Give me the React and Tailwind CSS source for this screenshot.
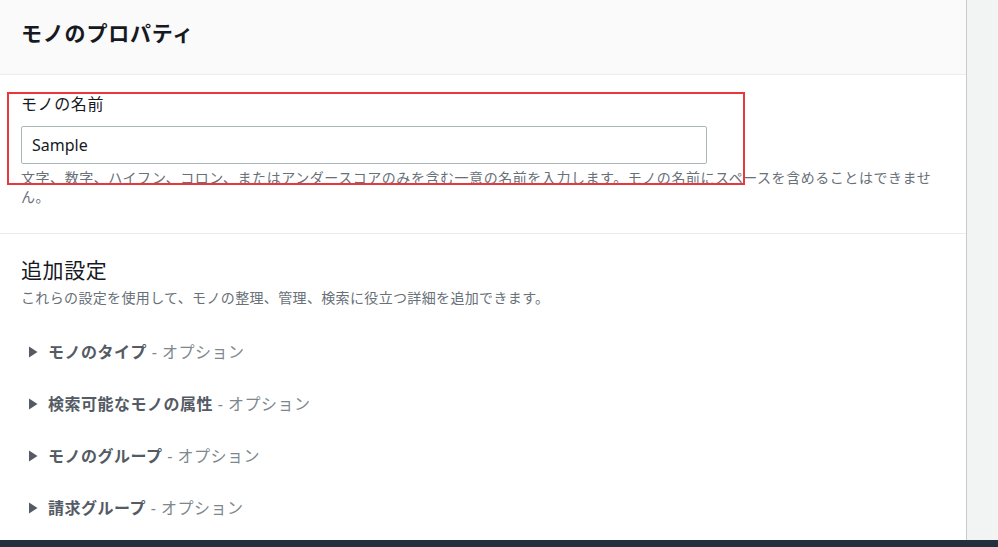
const items = [
  { name: 'モノのタイプ' },
  { name: '検索可能なモノの属性' },
  { name: 'モノのグループ' },
  { name: '請求グループ' },
]

function Caret() {
  return (
    <svg width="10" height="12" viewBox="0 0 10 12" className="shrink-0">
      <path d="M1 0.5 L9.5 6 L1 11.5 Z" fill="#545b64" />
    </svg>
  )
}

export default function App() {
  return (
    <div
      className="h-[547px] w-[998px] flex flex-col overflow-hidden bg-[#f2f3f3] text-[#16191f]"
      style={{ fontFamily: '"Noto Sans", "Noto Sans CJK JP", sans-serif' }}
    >
      <div className="flex flex-1 min-h-0">
        <div className="w-[967px] bg-white border-r border-[#c6cccc] flex flex-col">
          <div className="h-[75px] bg-[#fafafa] border-b border-[#eaeded] flex items-center pl-[21px] pb-[6px]">
            <h2 className="text-[21px] font-bold tracking-[0.8px] text-[#16191f]">モノのプロパティ</h2>
          </div>

          <div className="relative px-[21px] pt-[18px] pb-[27px] border-b border-[#eaeded]">
            <div className="text-[16px] leading-[22px] tracking-[0.6px] text-[#16191f]">モノの名前</div>
            <div className="mt-[11px] w-[686px] h-[38px] border border-[#aab7b8] rounded-[2px] flex items-center px-[10px]">
              <span className="text-[16px] text-[#16191f]">Sample</span>
            </div>
            <p className="mt-[4px] w-[925px] text-[14px] leading-[19px] tracking-[0.55px] text-[#687078]">
              文字、数字、ハイフン、コロン、またはアンダースコアのみを含む一意の名前を入力します。モノの名前にスペースを含めることはできません。
            </p>
            <div className="absolute left-[7px] top-[17px] w-[738px] h-[93px] border-2 border-[#e8383d] pointer-events-none" />
          </div>

          <div className="px-[21px] pt-[22px]">
            <h3 className="text-[21px] leading-[28px] tracking-[0.6px] text-[#16191f]">追加設定</h3>
            <p className="mt-[4px] text-[14px] leading-[20px] tracking-[0.35px] text-[#687078]">
              これらの設定を使用して、モノの整理、管理、検索に役立つ詳細を追加できます。
            </p>
            <div className="mt-[33px] flex flex-col gap-[30px] pl-[7px]">
              {items.map(it => (
                <div key={it.name} className="flex items-center gap-[10px] h-[22px] text-[16px] leading-[22px]">
                  <Caret />
                  <span>
                    <span className="font-bold text-[#545b64] tracking-[0.5px]">{it.name}</span>
                    <span className="text-[#7d878d] tracking-[0.5px]"> - オプション</span>
                  </span>
                </div>
              ))}
            </div>
          </div>
        </div>
        <div className="flex-1" />
      </div>
      <div className="h-[7px] bg-[#232f3e]" />
    </div>
  )
}
